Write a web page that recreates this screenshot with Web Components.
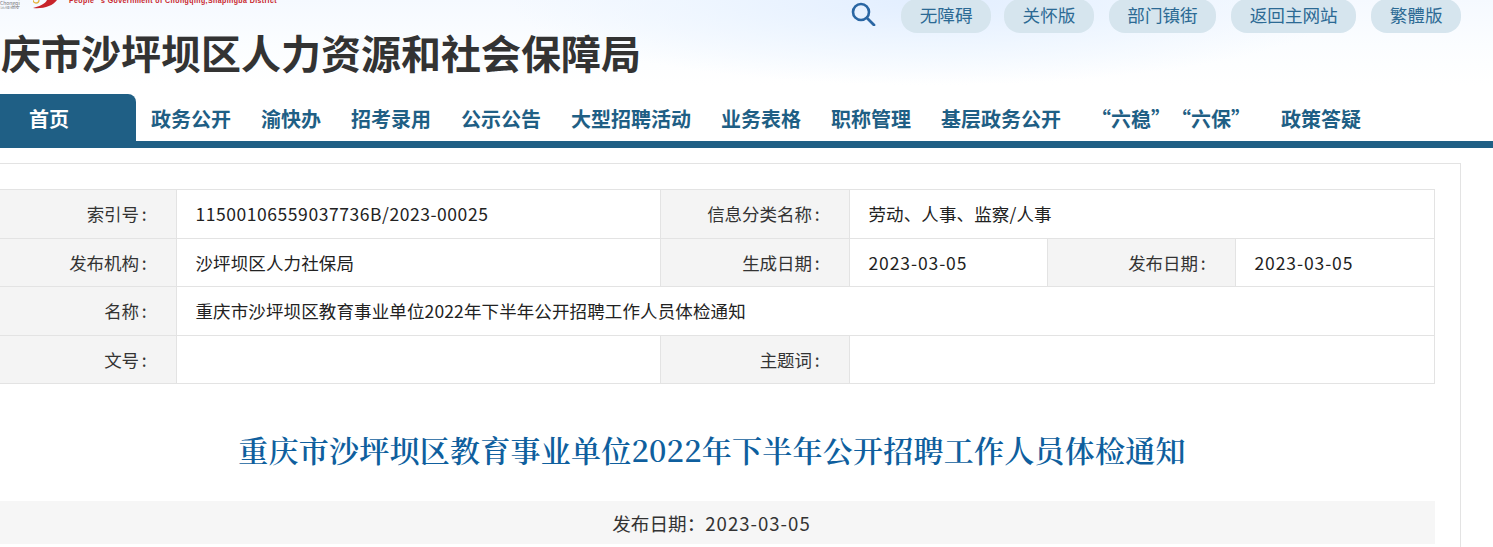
<!DOCTYPE html>
<html lang="zh-CN">
<head>
<meta charset="utf-8">
<title>重庆市沙坪坝区人力资源和社会保障局</title>
<style>
  html, body { margin: 0; padding: 0; height: 547px; overflow: hidden; background: #fff; }
  body { font-family: "Liberation Sans", "Noto Sans CJK SC", sans-serif; }
</style>
</head>
<body>
<site-header></site-header>
<article-page></article-page>

<script>
// SECTION: SiteHeader
class SiteHeader extends HTMLElement {
  constructor() {
    super();
    this.attachShadow({ mode: "open" });
    const links = ["无障碍", "关怀版", "部门镇街", "返回主网站", "繁體版"];
    const nav = ["政务公开", "渝快办", "招考录用", "公示公告", "大型招聘活动", "业务表格", "职称管理", "基层政务公开", "“六稳”“六保”", "政策答疑"];
    this.shadowRoot.innerHTML = `
      <style>
        :host { display: block; height: 148px; font-family: "Noto Sans CJK SC", sans-serif;
          background:
            radial-gradient(ellipse 420px 85px at 930px 0, #e2eeff 0%, rgba(235,244,255,.7) 55%, rgba(255,255,255,0) 100%),
            linear-gradient(#f5f9ff 0, #fbfdff 45px, #fff 85px); }
        .top { height: 94px; display: flex; }
        .brand { width: 660px; flex: none; margin-left: -39px; }
        .logo { height: 9px; display: flex; align-items: flex-start; padding-left: 39px; overflow: hidden; }
        .logo svg { flex: none; display: block; margin: 0 12px 0 13px; }
        .org { width: 20px; flex: none; font-size: 5px; line-height: 5px; color: #777; white-space: nowrap; overflow: hidden; }
        .en { font: bold 7px/7px "Liberation Sans", sans-serif; color: #c8242b; letter-spacing: .4px; white-space: nowrap; margin-top: -3px; }
        h1 { margin: 20px 0 0; font-size: 40px; line-height: 46px; font-weight: 700; color: #333; white-space: nowrap; }
        .tools { margin-left: auto; padding-right: 32px; height: 33px; display: flex; align-items: flex-start; }
        .tools svg { margin: 2px 25px 0 0; flex: none; }
        .pill { height: 34px; margin: -1px 0 0 15px; padding: 0 18.5px; border-radius: 16px; background: #d6e5ee; color: #2c6a94;
          font-size: 17.6px; line-height: 31px; white-space: nowrap; }
        .tools svg + .pill { margin-left: 0; }
        .tools svg + .pill + .pill { margin-left: 13px; }
        nav { height: 54px; box-sizing: border-box; border-bottom: 7px solid #1f5f85; display: flex; align-items: flex-start; }
        .home { width: 136px; flex: none; box-sizing: border-box; padding-left: 29px; background: #1f5f85; color: #fff; border-radius: 0 8px 0 0;
          font-size: 20px; font-weight: 700; line-height: 50px; height: 47px; }
        .item { margin-left: 30px; color: #1f5f85; font-size: 20px; font-weight: 700; line-height: 50px; white-space: nowrap; text-spacing-trim: space-all; }
        .home + .item { margin-left: 15px; }
      </style>
      <div class="top">
        <div class="brand">
          <div class="logo">
            <span class="org">Chongqing<br>沙坪坝区</span>
            <svg width="24" height="9" viewBox="0 0 24 9"><circle cx="3" cy="0" r="3" fill="none" stroke="#e4b33a" stroke-width="1.3"/><path d="M0 8C10 9 20 6 24 0H14C12 4 7 6 0 8Z" fill="#c8242b"/></svg>
            <span class="en">People ' s Government of Chongqing,Shapingba District</span>
          </div>
          <h1>重庆市沙坪坝区人力资源和社会保障局</h1>
        </div>
        <div class="tools">
          <svg width="25" height="24" viewBox="0 0 25 24" fill="none" stroke="#2a66a3"><circle cx="10" cy="10" r="8" stroke-width="2.6"/><path d="M16 16l7 7" stroke-width="2.8" stroke-linecap="round"/></svg>
          ${links.map((l) => `<span class="pill">${l}</span>`).join("")}
        </div>
      </div>
      <nav>
        <div class="home">首页</div>
        ${nav.map((n) => `<div class="item">${n}</div>`).join("")}
      </nav>`;
  }
}

// SECTION: InfoTable
class InfoTable extends HTMLElement {
  constructor() {
    super();
    this.attachShadow({ mode: "open" });
    const label = (text) => `<div class="k">${text}<i>:</i></div>`;
    this.shadowRoot.innerHTML = `
      <style>
        :host { display: block; font-family: "Noto Sans CJK SC", sans-serif; font-size: 17.5px; color: #333; }
        .grid { display: grid; grid-template-columns: 177px 484px 189px 198px 188px 199px; grid-auto-rows: 48.5px;
          border-top: 1px solid #e3e3e3; border-right: 1px solid #e3e3e3; box-sizing: border-box; }
        .k, .v { border-bottom: 1px solid #e3e3e3; box-sizing: border-box; line-height: 48px; white-space: nowrap; overflow: hidden; }
        .k { background: #f4f4f4; text-align: right; padding-right: 29.5px; border-right: 1px solid #e3e3e3; }
        .k i { font-style: normal; padding-left: 2.5px; }
        .v { padding-left: 18.5px; border-right: 1px solid #e3e3e3; color: #222; letter-spacing: .12px; }
        .n { letter-spacing: .55px; }
        .d { letter-spacing: .9px; }
        .w3 { grid-column: span 3; }
        .w5 { grid-column: span 5; }
        .last { border-right: 0; }
      </style>
      <div class="grid">
        ${label("索引号")}<div class="v n">11500106559037736B/2023-00025</div>
        ${label("信息分类名称")}<div class="v w3 last">劳动、人事、监察/人事</div>
        ${label("发布机构")}<div class="v">沙坪坝区人力社保局</div>
        ${label("生成日期")}<div class="v d">2023-03-05</div>
        ${label("发布日期")}<div class="v d last">2023-03-05</div>
        ${label("名称")}<div class="v w5 last">重庆市沙坪坝区教育事业单位2022年下半年公开招聘工作人员体检通知</div>
        ${label("文号")}<div class="v"></div>
        ${label("主题词")}<div class="v w3 last"></div>
      </div>`;
  }
}

// SECTION: ArticlePage
class ArticlePage extends HTMLElement {
  constructor() {
    super();
    this.attachShadow({ mode: "open" });
    this.shadowRoot.innerHTML = `
      <style>
        :host { display: block; margin-top: 15px; width: 1461px; box-sizing: border-box; height: 400px;
          border: 1px solid #e3e3e3; border-left: 0; border-bottom: 0; padding: 25px 25px 0 0; }
        h2 { margin: 45px 0 0; padding-right: 11px; text-align: center; font: 600 30px/40px "Noto Serif CJK SC", "Liberation Serif", serif; color: #0f5f9e; white-space: nowrap; letter-spacing: .25px; }
        .date { margin-top: 32px; height: 43px; background: #f6f6f6; padding-right: 12px; text-align: center; font: 18.6px/44px "Noto Sans CJK SC", sans-serif; color: #333; }
        .date span { letter-spacing: 1px; }
      </style>
      <info-table></info-table>
      <h2>重庆市沙坪坝区教育事业单位2022年下半年公开招聘工作人员体检通知</h2>
      <div class="date">发布日期：<span>2023-03-05</span></div>`;
  }
}

customElements.define("info-table", InfoTable);
customElements.define("site-header", SiteHeader);
customElements.define("article-page", ArticlePage);
</script>
</body>
</html>
